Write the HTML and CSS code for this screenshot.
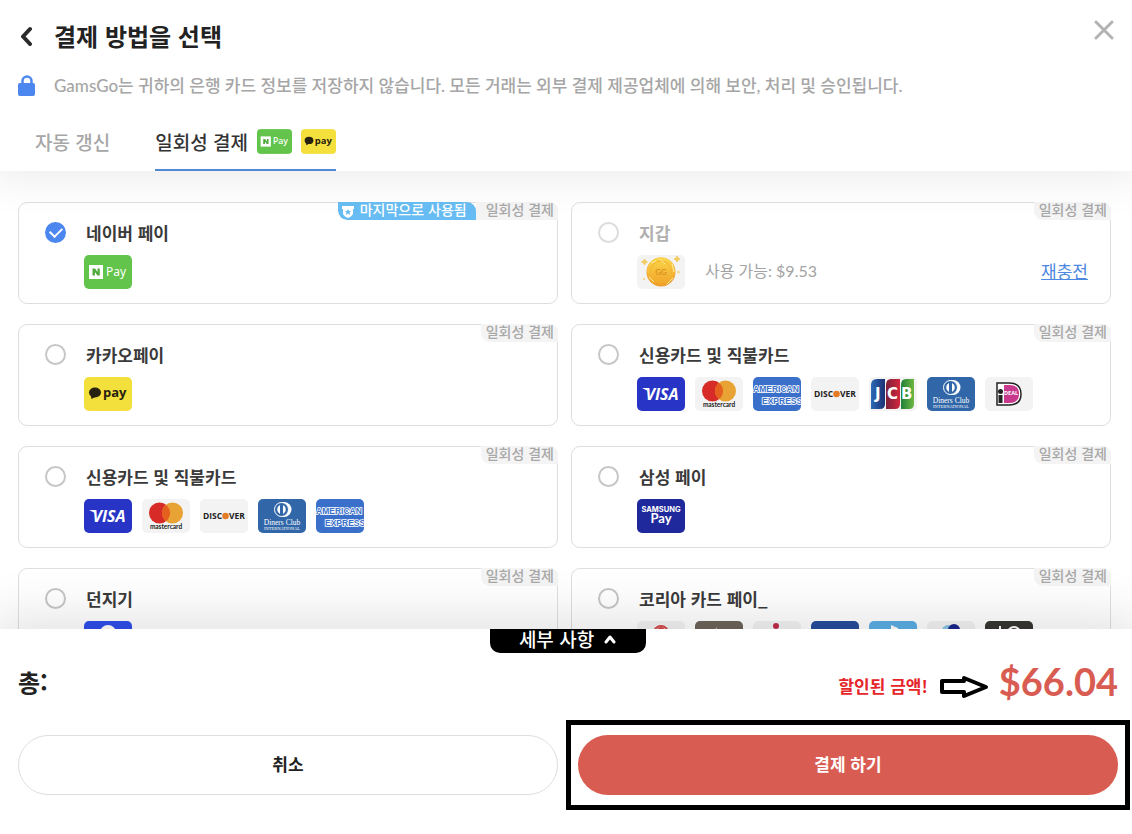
FILE: index.html
```
<!DOCTYPE html>
<html lang="ko">
<head>
    <meta charset="UTF-8">
    <meta name="viewport" content="width=device-width, initial-scale=1.0">
    <title>GamsGo - 결제 방법을 선택</title>
    <link rel="stylesheet" href="styles.css">
</head>

<body>
    <svg class="gradients" aria-hidden="true">
        <defs>
            <linearGradient id="coin-fill" x1="0" y1="0" x2="0" y2="1">
                <stop offset="0" stop-color="#fbd84b"/>
                <stop offset="1" stop-color="#f0a028"/>
            </linearGradient>
            <linearGradient id="jcb-blue"><stop offset="0" stop-color="#2c6bb5"/><stop offset="1" stop-color="#1c2f74"/></linearGradient>
            <linearGradient id="jcb-red"><stop offset="0" stop-color="#7c1f3a"/><stop offset="1" stop-color="#d2273d"/></linearGradient>
            <linearGradient id="jcb-green"><stop offset="0" stop-color="#22803a"/><stop offset="1" stop-color="#6db742"/></linearGradient>
        </defs>
    </svg>

    <!-- Shared payment logos -->
    <svg class="sprite" aria-hidden="true">
        <symbol id="naver" viewBox="0 0 48 34">
            <rect width="48" height="34" fill="#62c44a"/>
            <rect x="5" y="10" width="14" height="14" fill="#fff"/>
            <path d="M8.500 20.500V13.500H11L13.500 17V13.500H15.800V20.500H13.400L10.900 17V20.500Z" fill="#4faa3b"/>
            <text x="22" y="21" font-family="Noto Sans" font-size="12" fill="#fff">Pay</text>
        </symbol>
        <symbol id="kakao" viewBox="0 0 48 34">
            <rect width="48" height="34" fill="#f4e03c"/>
            <ellipse cx="11" cy="15.500" rx="6" ry="5" fill="#26220f"/>
            <path d="M6.500 17L7.500 22L12 19.500Z" fill="#26220f"/>
            <text x="19" y="20" font-family="Open Sans" font-size="13" font-weight="700" fill="#26220f">pay</text>
        </symbol>
        <symbol id="coin" viewBox="0 0 48 34">
            <rect width="48" height="34" fill="#f3f3f3"/>
            <circle cx="24" cy="17" r="14.500" fill="#ec9f30"/>
            <circle cx="24" cy="16.500" r="14" fill="url(#coin-fill)"/>
            <circle cx="24" cy="16.500" r="10.500" fill="none" stroke="#f3b531"/>
            <path d="M14 8l5-2M23 4l5 5M35 9l2 8M30 29l6-6M12 22l5 5" stroke="#fdeb9b"/>
            <text x="24" y="20" text-anchor="middle" font-family="Lato" font-size="8" font-weight="700" fill="#dc9420">GG</text>
            <path d="M7.500 4l1 2 2 1-2 1-1 2-1-2-2-1 2-1zM40 1l1 2 2 1-2 1-1 2-1-2-2-1 2-1z" fill="#f3cc63" stroke="#f3cc63"/>
            <circle cx="41.500" cy="17" r="1.500" fill="#f5d98c"/>
            <circle cx="7" cy="24" r="1.200" fill="#f5d98c"/>
        </symbol>
        <symbol id="visa" viewBox="0 0 48 34">
            <rect width="48" height="34" fill="#2734c5"/>
            <path d="M5 11h5l1 3z" fill="#fff"/>
            <text x="25" y="23" text-anchor="middle" font-family="Open Sans" font-size="16" font-weight="700" font-style="italic" fill="#fff">VISA</text>
        </symbol>
        <symbol id="mastercard" viewBox="0 0 48 34">
            <rect width="48" height="34" fill="#f3f3f3"/>
            <circle cx="17.500" cy="14" r="10.500" fill="#d62b27"/>
            <circle cx="30.500" cy="14" r="10.500" fill="#e9a234"/>
            <path d="M24 5.700a10.500 10.500 0 0 1 0 16.600a10.500 10.500 0 0 1 0-16.600z" fill="#e5601f"/>
            <text x="24" y="30" text-anchor="middle" font-family="Lato" font-size="6.500" font-weight="700" fill="#222">mastercard</text>
        </symbol>
        <symbol id="amex" viewBox="0 0 48 34">
            <rect width="48" height="34" fill="#3a70ca"/>
            <g font-family="Liberation Sans" font-size="8.500" font-weight="700" fill="#3a70ca" stroke="#fff" stroke-width="1.600" paint-order="stroke">
                <text x="0" y="15">AMERICAN</text>
                <text x="9" y="27">EXPRESS</text>
            </g>
        </symbol>
        <symbol id="discover" viewBox="0 0 48 34">
            <rect width="48" height="34" fill="#f3f3f3"/>
            <g font-family="Open Sans" font-size="8.500" font-weight="700" fill="#222">
                <text x="3" y="20">DISC</text>
                <text x="29" y="20">VER</text>
            </g>
            <circle cx="25.500" cy="17" r="3.300" fill="#e47b26"/>
        </symbol>
        <symbol id="jcb" viewBox="0 0 48 34">
            <rect width="48" height="34" fill="#f3f3f3"/>
            <path d="M8 2h8v25q0 5-5 5H2V8q0-6 6-6z" fill="url(#jcb-blue)"/>
            <path d="M22 2h9v25q0 5-5 5H17V8q0-6 5-6z" fill="url(#jcb-red)"/>
            <path d="M37 2h8v25q0 5-5 5H32V8q0-6 5-6z" fill="url(#jcb-green)"/>
            <g font-family="DejaVu Sans" font-size="15" font-weight="700" fill="#fff">
                <text x="6" y="22">J</text>
                <text x="18" y="22">C</text>
                <text x="32" y="22">B</text>
            </g>
        </symbol>
        <symbol id="diners" viewBox="0 0 48 34">
            <rect width="48" height="34" fill="#3167a8"/>
            <path d="M23 3h3a7.500 7.500 0 0 1 0 15h-3z" fill="#fff"/>
            <circle cx="23.500" cy="10.500" r="7" fill="#3167a8" stroke="#fff"/>
            <path d="M22 6a5 5 0 0 0 0 9zM25 6a5 5 0 0 1 0 9z" fill="#fff"/>
            <g font-family="Liberation Serif" text-anchor="middle" fill="#fff">
                <text x="24" y="26" font-size="7.500">Diners Club</text>
                <text x="24" y="31" font-size="4.500">INTERNATIONAL</text>
            </g>
        </symbol>
        <symbol id="ideal" viewBox="0 0 48 34">
            <rect width="48" height="34" fill="#f3f3f3"/>
            <path d="M12 6h12q12 0 12 11t-12 11H12z" fill="#fff" stroke="#222" stroke-width="1.500"/>
            <path d="M19 8h5q10 0 10 9t-10 9h-5z" fill="#c8388c"/>
            <circle cx="15.500" cy="14.500" r="2.500" fill="#222"/>
            <path d="M13.500 18h4v8h-4z" fill="#222"/>
            <text x="19" y="18" font-family="Open Sans" font-size="5.500" font-weight="700" fill="#fff">DEAL</text>
        </symbol>
        <symbol id="samsung" viewBox="0 0 48 34">
            <rect width="48" height="34" fill="#20299b"/>
            <g text-anchor="middle" font-weight="700" fill="#fff">
                <text x="24" y="13" font-family="Inter" font-size="7.500">SAMSUNG</text>
                <text x="24" y="24" font-family="Lato" font-size="13">Pay</text>
            </g>
        </symbol>
        <symbol id="toss" viewBox="0 0 48 34">
            <rect width="48" height="34" fill="#2f4fea"/>
            <circle cx="24" cy="12" r="8" fill="#fff"/>
        </symbol>
        <symbol id="shinhan" viewBox="0 0 48 34">
            <rect width="48" height="34" fill="#f3f3f3"/>
            <circle cx="24" cy="12" r="7" fill="none" stroke="#d4474a" stroke-width="2"/>
            <circle cx="24" cy="10" r="3" fill="none" stroke="#d4474a" stroke-width="2"/>
        </symbol>
        <symbol id="kb" viewBox="0 0 48 34">
            <rect width="48" height="34" fill="#6e655b"/>
            <path d="M21 6l3 5-5 5z" fill="#c9bfae"/>
        </symbol>
        <symbol id="lotte" viewBox="0 0 48 34">
            <rect width="48" height="34" fill="#f3f3f3"/>
            <circle cx="23" cy="5" r="3" fill="#c02a48"/>
            <path d="M22 10h4v12h-4z" fill="#c02a48"/>
        </symbol>
        <symbol id="woori" viewBox="0 0 48 34">
            <rect width="48" height="34" fill="#264d9c"/>
        </symbol>
        <symbol id="hana" viewBox="0 0 48 34">
            <rect width="48" height="34" fill="#5baee5"/>
            <path d="M22 4l7 3v13h-7z" fill="#fff"/>
        </symbol>
        <symbol id="citi" viewBox="0 0 48 34">
            <rect width="48" height="34" fill="#f3f3f3"/>
            <circle cx="21" cy="10" r="6" fill="#86c5e3"/>
            <circle cx="27" cy="9" r="6" fill="#19258b"/>
        </symbol>
        <symbol id="hyundai" viewBox="0 0 48 34">
            <rect width="48" height="34" fill="#383632"/>
            <path d="M15 5v12" stroke="#fff" stroke-width="2"/>
            <circle cx="29" cy="12" r="6" fill="none" stroke="#fff" stroke-width="2"/>
        </symbol>
    </svg>

    <header class="header">
        <div class="title-row">
            <button type="button" class="icon-button" aria-label="뒤로">
                <svg width="18" height="20" viewBox="0 0 18 20"><path d="M12 3L5 10.500L12 18" fill="none" stroke="#2b2b2b" stroke-width="4" stroke-linecap="round" stroke-linejoin="round"/></svg>
            </button>
            <h1>결제 방법을 선택</h1>
            <button type="button" class="icon-button close" aria-label="닫기">
                <svg width="20" height="22" viewBox="0 0 20 22"><path d="M2 4L18 20M18 4L2 20" fill="none" stroke="#b3b3b3" stroke-width="3" stroke-linecap="round"/></svg>
            </button>
        </div>
        <div class="notice">
            <svg width="18" height="22" viewBox="0 0 18 22"><path d="M4.500 10V6a4.500 4.500 0 0 1 9 0v4" fill="none" stroke="#4c87f0" stroke-width="2.500"/><rect y="8" width="17" height="13" rx="2" fill="#4c87f0"/></svg>
            <p>GamsGo는 귀하의 은행 카드 정보를 저장하지 않습니다. 모든 거래는 외부 결제 제공업체에 의해 보안, 처리 및 승인됩니다.</p>
        </div>
        <nav class="tabs">
            <button type="button" class="tab">자동 갱신</button>
            <button type="button" class="tab active">
                일회성 결제
                <svg class="chip" viewBox="0 0 48 34"><use href="#naver"/></svg>
                <svg class="chip" viewBox="0 0 48 34"><use href="#kakao"/></svg>
            </button>
        </nav>
    </header>

    <main class="methods">
        <div class="method">
            <input type="radio" name="method" id="m-naver" checked>
            <label class="name" for="m-naver">네이버 페이</label>
            <div class="logos">
                <svg class="logo"><use href="#naver"/></svg>
            </div>
            <div class="tags">
                <span class="last-used">
                    <svg width="12" height="12" viewBox="0 0 12 12"><path d="M0 0h12v3h-1v4q0 3-5 5q-5-2-5-5V3H0z" fill="#fff"/><path d="M6 3l1 2h2L7.500 6.500L8 9L6 7.500L4 9l.5-2.500L3 5h2z" fill="#67bdf3"/></svg>
                    마지막으로 사용됨
                </span>
                <span class="tag">일회성 결제</span>
            </div>
        </div>

        <div class="method disabled">
            <input type="radio" name="method" id="m-wallet" disabled>
            <label class="name" for="m-wallet">지갑</label>
            <div class="logos">
                <svg class="logo"><use href="#coin"/></svg>
                <span class="balance">사용 가능: $9.53</span>
                <a href="#" class="recharge">재충전</a>
            </div>
            <div class="tags"><span class="tag">일회성 결제</span></div>
        </div>

        <div class="method">
            <input type="radio" name="method" id="m-kakao">
            <label class="name" for="m-kakao">카카오페이</label>
            <div class="logos">
                <svg class="logo"><use href="#kakao"/></svg>
            </div>
            <div class="tags"><span class="tag">일회성 결제</span></div>
        </div>

        <div class="method">
            <input type="radio" name="method" id="m-card">
            <label class="name" for="m-card">신용카드 및 직불카드</label>
            <div class="logos">
                <svg class="logo"><use href="#visa"/></svg>
                <svg class="logo"><use href="#mastercard"/></svg>
                <svg class="logo"><use href="#amex"/></svg>
                <svg class="logo"><use href="#discover"/></svg>
                <svg class="logo"><use href="#jcb"/></svg>
                <svg class="logo"><use href="#diners"/></svg>
                <svg class="logo"><use href="#ideal"/></svg>
            </div>
            <div class="tags"><span class="tag">일회성 결제</span></div>
        </div>

        <div class="method">
            <input type="radio" name="method" id="m-card2">
            <label class="name" for="m-card2">신용카드 및 직불카드</label>
            <div class="logos">
                <svg class="logo"><use href="#visa"/></svg>
                <svg class="logo"><use href="#mastercard"/></svg>
                <svg class="logo"><use href="#discover"/></svg>
                <svg class="logo"><use href="#diners"/></svg>
                <svg class="logo"><use href="#amex"/></svg>
            </div>
            <div class="tags"><span class="tag">일회성 결제</span></div>
        </div>

        <div class="method">
            <input type="radio" name="method" id="m-samsung">
            <label class="name" for="m-samsung">삼성 페이</label>
            <div class="logos">
                <svg class="logo"><use href="#samsung"/></svg>
            </div>
            <div class="tags"><span class="tag">일회성 결제</span></div>
        </div>

        <div class="method">
            <input type="radio" name="method" id="m-toss">
            <label class="name" for="m-toss">던지기</label>
            <div class="logos">
                <svg class="logo"><use href="#toss"/></svg>
            </div>
            <div class="tags"><span class="tag">일회성 결제</span></div>
        </div>

        <div class="method">
            <input type="radio" name="method" id="m-korea">
            <label class="name" for="m-korea">코리아 카드 페이_</label>
            <div class="logos">
                <svg class="logo"><use href="#shinhan"/></svg>
                <svg class="logo"><use href="#kb"/></svg>
                <svg class="logo"><use href="#lotte"/></svg>
                <svg class="logo"><use href="#woori"/></svg>
                <svg class="logo"><use href="#hana"/></svg>
                <svg class="logo"><use href="#citi"/></svg>
                <svg class="logo"><use href="#hyundai"/></svg>
            </div>
            <div class="tags"><span class="tag">일회성 결제</span></div>
        </div>
    </main>

    <footer class="footer">
        <button type="button" class="details">
            세부 사항
            <svg width="14" height="10" viewBox="0 0 14 10"><path d="M3 8L7 3L11 8" fill="none" stroke="#fff" stroke-width="3" stroke-linecap="round" stroke-linejoin="round"/></svg>
        </button>
        <div class="total-row">
            <span class="total-label">총:</span>
            <span class="discount">할인된 금액!</span>
            <svg class="arrow" width="49" height="24" viewBox="0 0 49 24"><path d="M2 6H24V3L46 12L24 21V17H2Z" fill="#fff" stroke="#000" stroke-width="4" stroke-linejoin="round"/></svg>
            <strong class="price">$66.04</strong>
        </div>
        <div class="actions">
            <button type="button" class="cancel">취소</button>
            <div class="highlight">
                <button type="button" class="pay">결제 하기</button>
            </div>
        </div>
    </footer>
</body>
</html>
```
FILE: styles.css
```
* {
    box-sizing: border-box;
}

body {
    margin: 0;
    height: 100vh;
    display: flex;
    flex-direction: column;
    overflow: hidden;
    background-color: #fff;
    color: #222;
    font-family: 'Noto Sans CJK KR', sans-serif;
}

button {
    padding: 0;
    border: none;
    background: none;
    color: inherit;
    font-family: inherit;
    cursor: pointer;
}

svg {
    display: block;
    flex-shrink: 0;
}

.gradients {
    position: absolute;
    width: 0;
    height: 0;
}

.sprite {
    display: none;
}

/* Header */
.header {
    position: relative;
    z-index: 1;
    background-color: #fff;
    padding: 18px 18px 0;
    box-shadow: 0 0 40px 8px rgba(0, 0, 0, 0.08);
}

.title-row {
    display: flex;
    align-items: center;
    gap: 18px;
    height: 36px;
}

.title-row h1 {
    margin: 0;
    font-size: 24px;
    font-weight: 700;
    line-height: 36px;
}

.close {
    margin-left: auto;
    align-self: flex-start;
}

.notice {
    display: flex;
    align-items: center;
    gap: 18px;
    margin-top: 20px;
}

.notice p {
    margin: 0;
    font-family: Lato, 'Noto Sans CJK KR', sans-serif;
    font-size: 17px;
    font-weight: 500;
    line-height: 24px;
    color: #a6a6a6;
}

.tabs {
    display: flex;
    gap: 45px;
    margin-top: 16px;
    padding-left: 17px;
}

.tab {
    display: flex;
    align-items: center;
    gap: 9px;
    height: 57px;
    border-bottom: 2px solid transparent;
    font-size: 19px;
    font-weight: 500;
    color: #a6a6a6;
}

.tab.active {
    color: #333;
    border-color: #5288d4;
}

.chip {
    width: 35px;
    height: 25px;
    border-radius: 4px;
}

/* Payment methods */
.methods {
    flex: 1;
    min-height: 0;
    overflow: hidden;
    display: grid;
    grid-template-columns: 1fr 1fr;
    align-content: start;
    gap: 20px 13px;
    padding: 31px 21px 0 18px;
}

.method {
    position: relative;
    display: grid;
    grid-template-columns: 21px 1fr;
    align-items: center;
    gap: 10px 18px;
    padding: 17px 22px 14px 26px;
    border: 1px solid #dedede;
    border-radius: 9px;
}

.method input {
    appearance: none;
    width: 21px;
    height: 21px;
    margin: 0;
    border: 2px solid #c6c6c6;
    border-radius: 50%;
}

.method input:checked {
    display: flex;
    align-items: center;
    justify-content: center;
    border: none;
    background-color: #4c87f0;
}

.method input:checked::before {
    content: "";
    width: 10px;
    height: 6px;
    margin-bottom: 3px;
    border-left: 2px solid #fff;
    border-bottom: 2px solid #fff;
    transform: rotate(-45deg);
}

.name {
    padding-left: 2px;
    font-size: 17px;
    font-weight: 700;
    line-height: 25px;
    color: #3a3a3a;
}

.logos {
    grid-column: 2;
    display: flex;
    align-items: center;
    gap: 10px;
}

.logo {
    width: 48px;
    height: 34px;
    border-radius: 5px;
}

.disabled .name {
    color: #b0b0b0;
}

.disabled input {
    border-color: #dcdcdc;
}

.balance {
    padding: 0 0 4px 10px;
    font-family: Lato, 'Noto Sans CJK KR', sans-serif;
    font-size: 16px;
    color: #a3a3a3;
}

.recharge {
    margin-left: auto;
    padding-bottom: 4px;
    font-size: 17px;
    color: #4c87e0;
}

.tags {
    position: absolute;
    top: -1px;
    right: -1px;
    display: flex;
    height: 18px;
    overflow: hidden;
    border-radius: 0 9px 0 9px;
    font-size: 14px;
    font-weight: 500;
    line-height: 14px;
}

.tag {
    padding: 0 4px 0 5px;
    background-color: #f4f4f4;
    color: #a8a8a8;
}

.last-used {
    display: flex;
    gap: 6px;
    padding: 0 9px 0 4px;
    border-radius: 0 9px 0 9px;
    background-color: #67bdf3;
    color: #fff;
}

.last-used svg {
    margin-top: 4px;
}

.last-used + .tag {
    padding-left: 10px;
}

/* Footer */
.footer {
    position: relative;
    z-index: 1;
    background-color: #fff;
    padding: 0 14px 39px 18px;
    box-shadow: 0 0 50px 10px rgba(0, 0, 0, 0.12);
}

.details {
    display: flex;
    align-items: center;
    justify-content: center;
    gap: 9px;
    width: 156px;
    height: 24px;
    margin: 0 auto;
    padding-bottom: 4px;
    border-radius: 0 0 10px 10px;
    background-color: #000;
    color: #fff;
    font-size: 19px;
    font-weight: 500;
    line-height: 20px;
}

.total-row {
    display: flex;
    align-items: center;
    height: 56px;
}

.total-label {
    margin-right: auto;
    font-size: 24px;
    font-weight: 700;
}

.discount {
    padding-top: 8px;
    font-size: 17px;
    font-weight: 700;
    color: #e5252a;
}

.arrow {
    margin: 12px 10px 0 12px;
}

.price {
    font-family: Lato, sans-serif;
    font-size: 38px;
    font-weight: 700;
    color: #d95c52;
}

.actions {
    display: grid;
    grid-template-columns: 1fr 1fr;
    gap: 20px;
    margin-top: 26px;
}

.cancel,
.pay {
    width: 100%;
    height: 60px;
    padding-bottom: 4px;
    border-radius: 30px;
    font-size: 17px;
    font-weight: 700;
}

.cancel {
    border: 1px solid #dedede;
}

.highlight {
    margin: -15px -12px;
    padding: 10px 7px;
    border: 5px solid #000;
}

.pay {
    display: block;
    background-color: #d95c52;
    color: #fff;
}
```
